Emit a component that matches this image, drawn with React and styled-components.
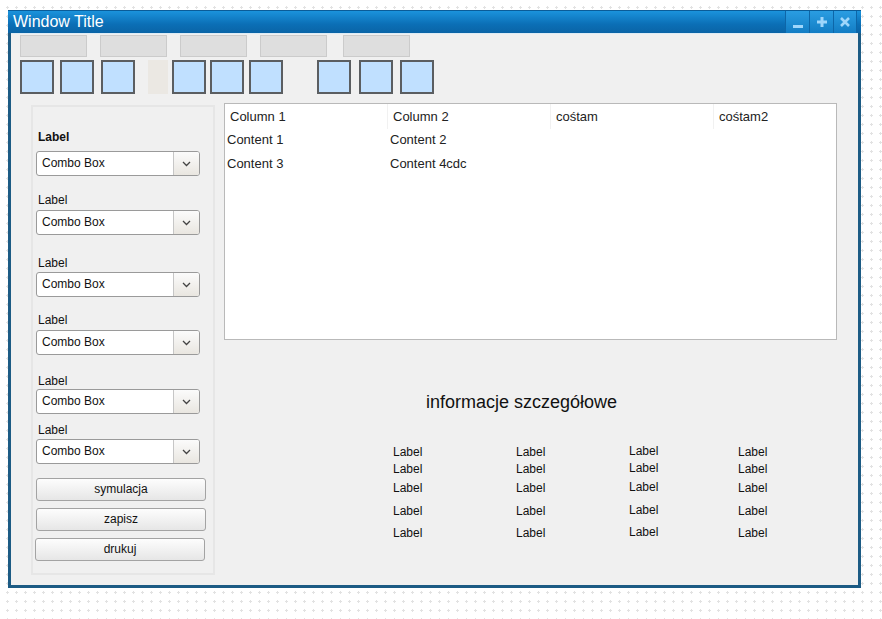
import React from "react";
import styled, { createGlobalStyle } from "styled-components";

const GlobalStyle = createGlobalStyle`
  html, body {
    margin: 0;
    padding: 0;
  }
  body {
    background-color: #ffffff;
    background-image: radial-gradient(#e2e2e2 1px, transparent 1.3px);
    background-size: 9px 9px;
    background-position: 3px 3px;
    font-family: "Liberation Sans", Arial, sans-serif;
    color: #222;
  }
`;

const Page = styled.div`
  padding: 10px 0 0 8px;
  width: 882px;
  height: 619px;
  box-sizing: border-box;
`;

const Window = styled.div`
  width: 853px;
  height: 578px;
  box-sizing: border-box;
  border: 3px solid #1c5b84;
  border-top: 0;
  display: flex;
  flex-direction: column;
  background: #f0f0f0;
`;

const TitleBar = styled.div`
  height: 23px;
  margin: 0 -3px;
  display: flex;
  align-items: stretch;
  background: linear-gradient(#1b93dc, #0b6fb6 60%, #0a64a6);
  border-top: 1px solid #0a5c98;
  box-sizing: border-box;
`;

const Title = styled.div`
  flex: 1;
  color: #fff;
  font-size: 16px;
  line-height: 22px;
  padding-left: 5px;
`;

const TitleButton = styled.div`
  width: 24px;
  display: flex;
  align-items: ${(p) => (p.low ? "flex-end" : "center")};
  padding-bottom: ${(p) => (p.low ? 4 : 0)}px;
  box-sizing: border-box;
  justify-content: center;
  background: linear-gradient(#2a9de2, #137dc4);
  border-left: 1px solid #0d66a8;
  &:last-child {
    margin-right: 4px;
    border-right: 1px solid #0d66a8;
  }
`;

const Content = styled.div`
  flex: 1;
  border-top: 1px solid #dcebf5;
  padding: 1px 0 0 9px;
  display: flex;
  flex-direction: column;
`;

const ToolRow = styled.div`
  display: flex;
  align-items: flex-start;
  margin-top: ${(p) => p.mt || 0}px;
`;

const GreyButton = styled.div`
  width: 67px;
  height: 22px;
  box-sizing: border-box;
  margin-left: ${(p) => p.ml}px;
  background: #dedede;
  border: 1px solid #cbcbcb;
`;

const IconTile = styled.div`
  width: ${(p) => (p.blank ? "20px" : "34px")};
  height: 34px;
  box-sizing: border-box;
  margin-left: ${(p) => p.ml}px;
  background: ${(p) => (p.blank ? "#ebe8e3" : "#c0e0ff")};
  border: ${(p) => (p.blank ? "none" : "2px solid #5b5e61")};
`;

const Main = styled.div`
  display: flex;
  margin-top: 9px;
`;

const SidePanel = styled.div`
  margin: 2px 0 0 11px;
  width: 184px;
  height: 470px;
  box-sizing: border-box;
  border: 2px solid #e6e6e6;
  padding: 23px 0 0 3px;
  display: flex;
  flex-direction: column;
`;

const FieldLabel = styled.div`
  font-size: 12px;
  font-weight: ${(p) => (p.bold ? "bold" : "normal")};
  line-height: 14px;
  margin-top: ${(p) => p.mt}px;
  margin-left: 2px;
  color: #111;
`;

const Combo = styled.div`
  margin-top: ${(p) => p.mt}px;
  width: 164px;
  height: 25px;
  flex-shrink: 0;
  box-sizing: border-box;
  border: 1px solid #9a9a9a;
  border-radius: 3px;
  background: #fff;
  display: flex;
  font-size: 12px;
  overflow: hidden;
`;

const ComboText = styled.div`
  flex: 1;
  line-height: 23px;
  padding-left: 5px;
  color: #111;
`;

const ComboArrow = styled.div`
  width: 25px;
  border-left: 1px solid #c6c6c6;
  background: linear-gradient(#fbfbfb, #e9e6e0);
  display: flex;
  align-items: center;
  justify-content: center;
`;

const Button = styled.div`
  width: 170px;
  height: 23px;
  flex-shrink: 0;
  box-sizing: border-box;
  margin-top: ${(p) => p.mt}px;
  margin-left: ${(p) => p.ml || 0}px;
  border: 1px solid #a3a3a3;
  border-radius: 3px;
  background: linear-gradient(#fdfdfd, #e6e6e6);
  font-size: 12px;
  line-height: 21px;
  text-align: center;
  color: #111;
`;

const RightArea = styled.div`
  margin-left: 9px;
  display: flex;
  flex-direction: column;
`;

const Table = styled.div`
  width: 613px;
  height: 237px;
  box-sizing: border-box;
  border: 1px solid #b9b9b9;
  background: #fff;
  font-size: 13px;
`;

const Row = styled.div`
  display: grid;
  grid-template-columns: 163px 163px 163px 1fr;
  height: 24px;
  align-items: center;
`;

const HeaderCell = styled.div`
  height: 100%;
  line-height: 25px;
  padding-left: 5px;
  border-right: 1px solid #f1f1f1;
  &:last-child {
    border-right: 0;
  }
`;

const Cell = styled.div`
  padding-left: 2px;
  line-height: 24px;
`;

const Heading = styled.div`
  margin: 51px 0 0 202px;
  font-size: 18px;
  line-height: 22px;
  color: #111;
`;

const LabelGrid = styled.div`
  margin: 32px 0 0 169px;
  display: grid;
  grid-template-columns: 123px 113px 109px 60px;
  grid-template-rows: 17px 19px 23px 22px 20px;
  font-size: 12px;
`;

const GridLabel = styled.div`
  line-height: 14px;
  margin-top: ${(p) => (p.raised ? -1 : 0)}px;
  color: #111;
`;

const Chevron = () => (
  <svg width="9" height="6" viewBox="0 0 9 6">
    <path d="M1 1 L4.5 4.5 L8 1" fill="none" stroke="#444" strokeWidth="1.3" />
  </svg>
);

const grey = [0, 13, 13, 13, 16];
const tiles = [
  { ml: 0 },
  { ml: 6 },
  { ml: 7 },
  { ml: 13, blank: true },
  { ml: 4 },
  { ml: 4 },
  { ml: 5 },
  { ml: 34 },
  { ml: 8 },
  { ml: 7 },
];

// label top margin, combo top margin
const fields = [
  { bold: true, mt: 0, cmt: 7 },
  { mt: 17, cmt: 3 },
  { mt: 21, cmt: 2 },
  { mt: 16, cmt: 3 },
  { mt: 19, cmt: 1 },
  { mt: 9, cmt: 2 },
];

const columns = ["Column 1", "Column 2", "cośtam", "cośtam2"];
const rows = [
  ["Content 1", "Content 2", "", ""],
  ["Content 3", "Content 4cdc", "", ""],
];

export default function App() {
  return (
    <>
      <GlobalStyle />
      <Page>
        <Window>
          <TitleBar>
            <Title>Window Title</Title>
            <TitleButton low>
              <svg width="10" height="4" viewBox="0 0 10 4">
                <rect x="0" y="0" width="10" height="3" fill="#9fd6fb" />
              </svg>
            </TitleButton>
            <TitleButton>
              <svg width="10" height="10" viewBox="0 0 10 10">
                <path d="M3.5 0h3v3.5H10v3H6.5V10h-3V6.5H0v-3h3.5z" fill="#9fd6fb" />
              </svg>
            </TitleButton>
            <TitleButton>
              <svg width="10" height="10" viewBox="0 0 10 10">
                <path d="M1 1L9 9M9 1L1 9" stroke="#9fd6fb" strokeWidth="2.6" />
              </svg>
            </TitleButton>
          </TitleBar>
          <Content>
            <ToolRow>
              {grey.map((ml, i) => (
                <GreyButton key={i} ml={ml} />
              ))}
            </ToolRow>
            <ToolRow mt={3}>
              {tiles.map((t, i) => (
                <IconTile key={i} ml={t.ml} blank={t.blank} />
              ))}
            </ToolRow>
            <Main>
              <SidePanel>
                {fields.map((f, i) => (
                  <React.Fragment key={i}>
                    <FieldLabel bold={f.bold} mt={f.mt}>
                      Label
                    </FieldLabel>
                    <Combo mt={f.cmt}>
                      <ComboText>Combo Box</ComboText>
                      <ComboArrow>
                        <Chevron />
                      </ComboArrow>
                    </Combo>
                  </React.Fragment>
                ))}
                <Button mt={14}>symulacja</Button>
                <Button mt={7}>zapisz</Button>
                <Button mt={7} ml={-1}>
                  drukuj
                </Button>
              </SidePanel>
              <RightArea>
                <Table>
                  <Row>
                    {columns.map((c) => (
                      <HeaderCell key={c}>{c}</HeaderCell>
                    ))}
                  </Row>
                  {rows.map((r, i) => (
                    <Row key={i}>
                      {r.map((c, j) => (
                        <Cell key={j}>{c}</Cell>
                      ))}
                    </Row>
                  ))}
                </Table>
                <Heading>informacje szczegółowe</Heading>
                <LabelGrid>
                  {Array.from({ length: 20 }).map((_, i) => (
                    <GridLabel key={i} raised={i % 4 === 2}>
                      Label
                    </GridLabel>
                  ))}
                </LabelGrid>
              </RightArea>
            </Main>
          </Content>
        </Window>
      </Page>
    </>
  );
}
